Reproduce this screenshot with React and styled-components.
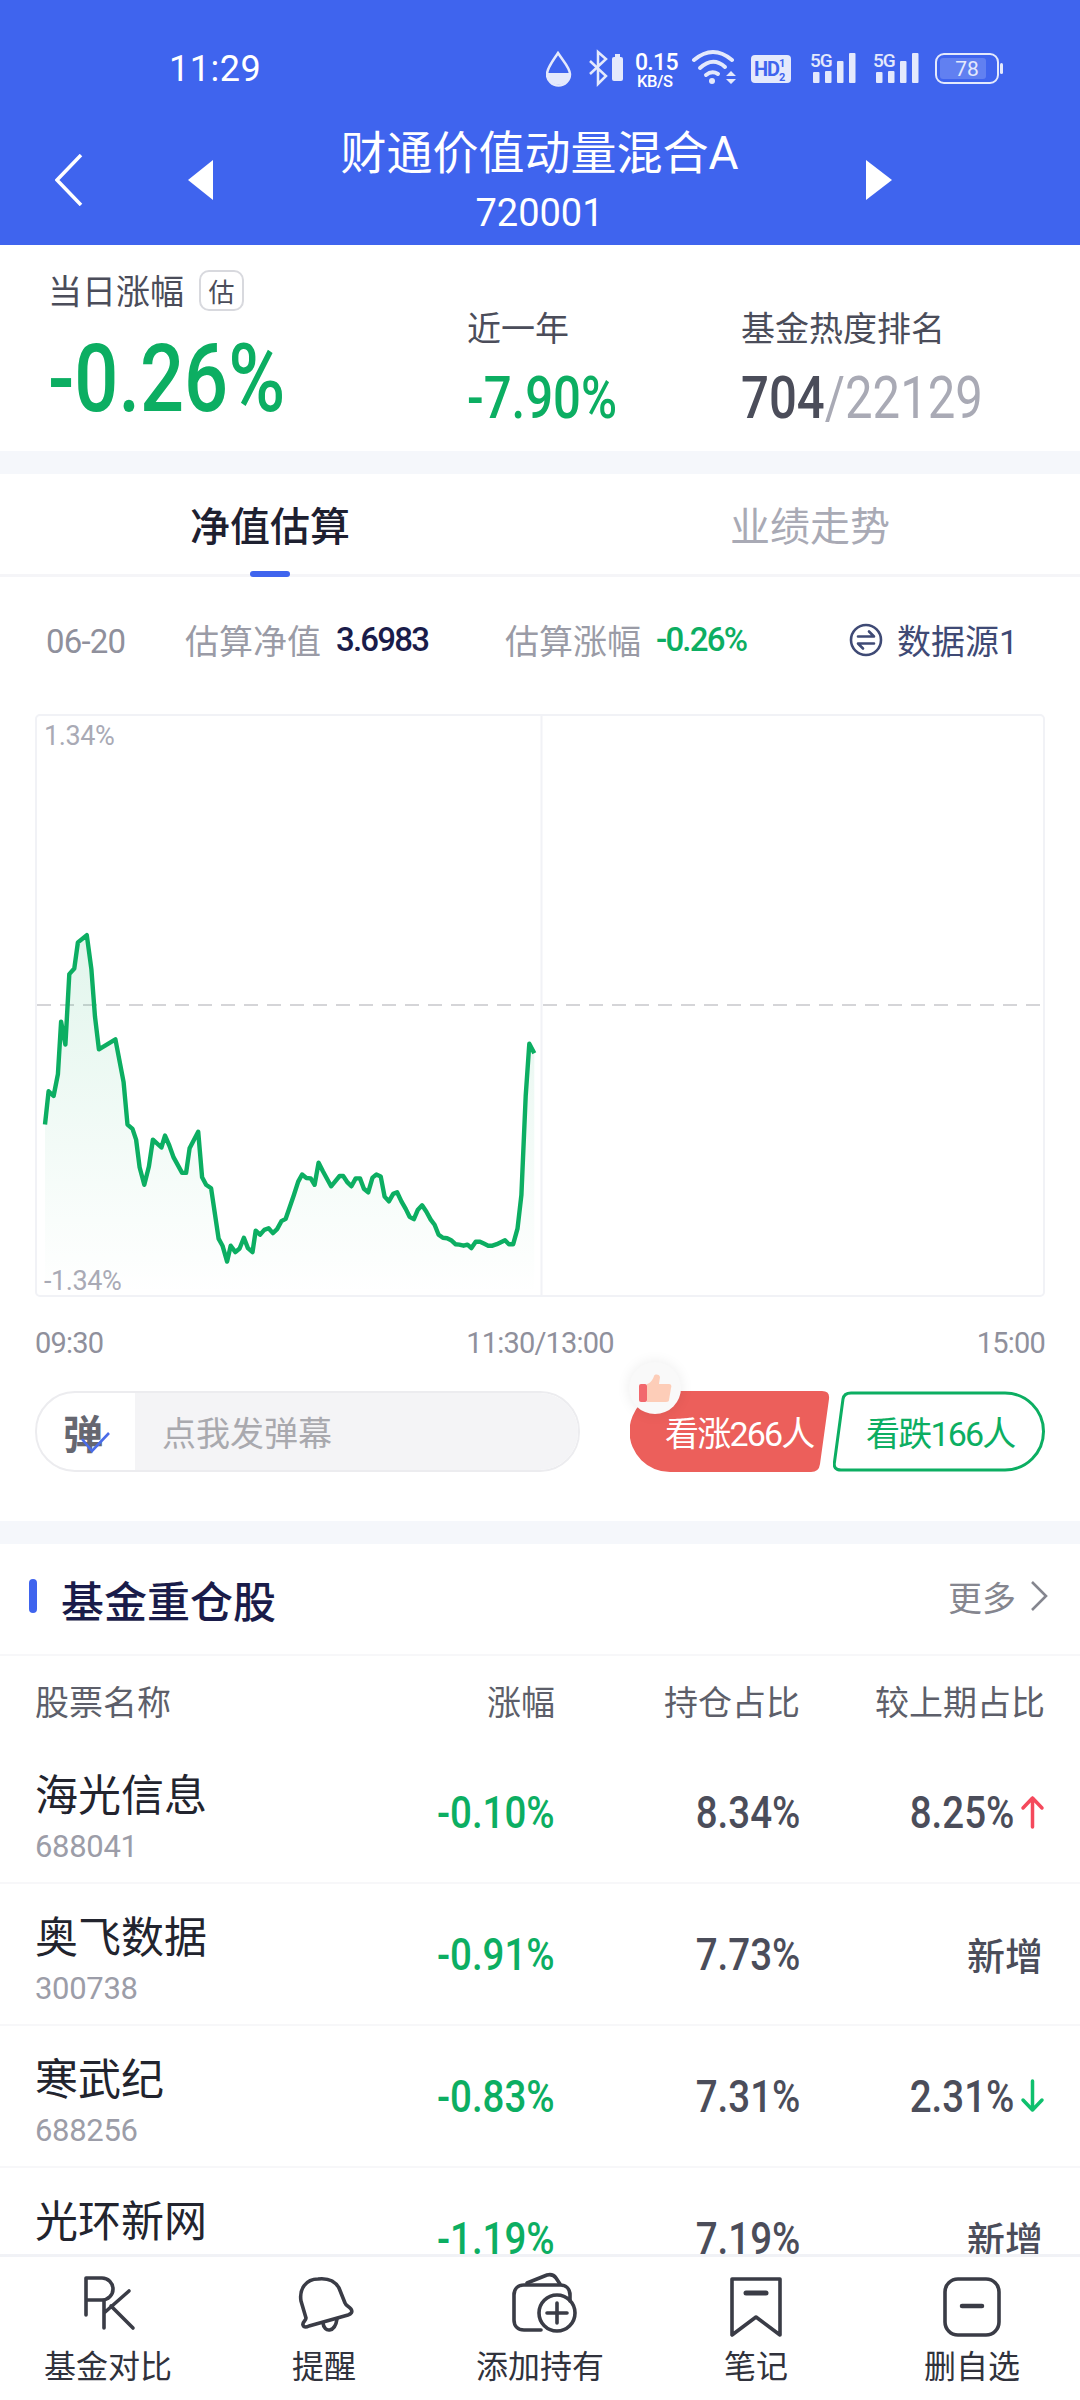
import React from 'react';
import styled, { createGlobalStyle } from 'styled-components';

const BLUE = '#3f64ee';
const GREEN = '#0cae62';
const DARK = '#4b4d5a';
const GRAY = '#a9aab5';
const NAVY = '#1a1c4a';

const GlobalStyle = createGlobalStyle`
  html, body { margin: 0; padding: 0; background: #fff; }
  body { font-family: Roboto, "Noto Sans CJK SC", sans-serif; }
  * { box-sizing: border-box; }
`;

const Page = styled.div`
  width: 1080px;
  height: 2400px;
  display: flex;
  flex-direction: column;
  overflow: hidden;
  background: #fff;
`;

const Header = styled.header`
  height: 245px;
  flex: none;
  background: ${BLUE};
  color: #fff;
`;

const StatusBar = styled.div`
  height: 123px;
  padding: 15px 77px 0 169px;
  display: flex;
  align-items: center;
  justify-content: space-between;
`;

const Time = styled.span`
  font-size: 36px;
  letter-spacing: 0.5px;
`;

const NavRow = styled.div`
  display: flex;
  align-items: center;
  padding-left: 55px;
  padding-right: 188px;
`;

const NavIcon = styled.svg`
  flex: none;
  margin-left: ${(p) => p.$left || 0}px;
  margin-bottom: 6px;
`;

const TitleBlock = styled.div`
  flex: 1;
  text-align: center;
`;

const Title = styled.div`
  font-size: 46px;
  line-height: 60px;
`;

const Code = styled.div`
  font-size: 38px;
  line-height: 60px;
`;

const Stats = styled.section`
  height: 206px;
  flex: none;
  display: flex;
  padding-left: 48px;
`;

const StatCol = styled.div`
  width: ${(p) => p.$width}px;
  padding-top: ${(p) => p.$top}px;
`;

const StatLabel = styled.div`
  display: flex;
  align-items: center;
  height: 44px;
  font-size: 34px;
  color: ${DARK};
`;

const EstTag = styled.span`
  width: 45px;
  height: 41px;
  margin: 3px 0 0 15px;
  display: flex;
  align-items: center;
  justify-content: center;
  border: 2px solid #d8d9de;
  border-radius: 10px;
  font-size: 26px;
`;

const BigValue = styled.div`
  margin-top: 18px;
  font-size: 94px;
  line-height: 100px;
  font-weight: 500;
  color: ${GREEN};
  transform: scaleX(0.825);
  transform-origin: left center;
`;

const MidValue = styled.div`
  margin-top: 15px;
  font-size: 59px;
  line-height: 70px;
  font-weight: 500;
  white-space: nowrap;
  color: ${(p) => p.$color || GREEN};
  transform: scaleX(0.832);
  transform-origin: left center;
  span { color: ${GRAY}; font-weight: 400; }
`;

const GapBar = styled.div`
  height: 23px;
  flex: none;
  background: #f5f7fb;
`;

const Tabs = styled.div`
  height: 103px;
  flex: none;
  display: flex;
  border-bottom: 3px solid #f5f5f8;
`;

const Tab = styled.div`
  position: relative;
  flex: 1;
  display: flex;
  align-items: center;
  justify-content: center;
  font-size: 40px;
  font-weight: ${(p) => (p.$active ? 500 : 400)};
  color: ${(p) => (p.$active ? '#1e2030' : GRAY)};
  ${(p) =>
    p.$active &&
    `&::after {
      content: '';
      position: absolute;
      left: 250px;
      bottom: -3px;
      width: 40px;
      height: 6px;
      border-radius: 3px;
      background: ${BLUE};
    }`}
`;

const InfoRow = styled.div`
  height: 130px;
  flex: none;
  display: flex;
  align-items: center;
  padding: 0 62px 5px 46px;
`;

const InfoDate = styled.span`
  width: 139px;
  margin-top: 3px;
  font-size: 33px;
  letter-spacing: -0.8px;
  color: #8f909c;
`;

const InfoGroup = styled.div`
  display: flex;
  align-items: center;
  width: ${(p) => p.$width}px;
  gap: 15px;
`;

const InfoLabel = styled.span`
  font-size: 34px;
  color: #9a9ba6;
`;

const InfoValue = styled.span`
  font-size: 33px;
  font-weight: 500;
  letter-spacing: -1.8px;
  color: ${(p) => p.$color};
`;

const Source = styled.div`
  margin-left: auto;
  display: flex;
  align-items: center;
  gap: 14px;
  font-size: 34px;
  color: #3f4a75;
`;

const ChartBox = styled.div`
  position: relative;
  flex: none;
  width: 1010px;
  height: 583px;
  margin: 7px 0 0 35px;
  svg { display: block; }
`;

const ChartLabel = styled.span`
  position: absolute;
  left: 9px;
  ${(p) => (p.$bottom ? 'bottom: 0;' : 'top: 6px;')}
  font-size: 27px;
  line-height: 32px;
  letter-spacing: -0.4px;
  color: ${GRAY};
`;

const AxisRow = styled.div`
  height: 92px;
  flex: none;
  padding: 0 35px;
  display: flex;
  align-items: center;
  justify-content: space-between;
  font-size: 29px;
  letter-spacing: -0.8px;
  color: #8f909c;
`;

const ActionRow = styled.div`
  height: 81px;
  flex: none;
  margin: 2px 0 49px;
  padding-left: 35px;
  display: flex;
`;

const Danmu = styled.div`
  width: 545px;
  display: flex;
  border: 2px solid #ececef;
  border-radius: 40px;
  overflow: hidden;
`;

const DanmuBadge = styled.div`
  position: relative;
  width: 98px;
  flex: none;
  display: flex;
  align-items: center;
  justify-content: center;
  padding-right: 6px;
  font-size: 40px;
  font-weight: 700;
  color: #666770;
  svg { position: absolute; left: 44px; top: 39px; }
`;

const DanmuInput = styled.div`
  flex: 1;
  display: flex;
  align-items: center;
  padding-left: 27px;
  background: #f4f4f6;
  font-size: 34px;
  color: #a9a9ae;
`;

const Vote = styled.div`
  position: relative;
  width: ${(p) => p.$width}px;
  margin-left: ${(p) => p.$left}px;
  display: flex;
  align-items: center;
  padding-left: ${(p) => p.$pad}px;
  font-size: 34px;
  letter-spacing: -1.8px;
  color: ${(p) => p.$color};
  > svg { position: absolute; inset: 0; }
  > span { position: relative; }
`;

const ThumbBadge = styled.div`
  position: absolute;
  left: -1px;
  top: -29px;
  width: 52px;
  height: 52px;
  display: flex;
  align-items: center;
  justify-content: center;
  border-radius: 50%;
  background: #f9f9f9;
  box-shadow: 0 0 14px rgba(0, 0, 0, 0.08);
`;

const SectionHead = styled.div`
  height: 112px;
  flex: none;
  display: flex;
  align-items: center;
  padding: 0 32px 0 29px;
  border-bottom: 2px solid #f7f7f9;
`;

const SectionMark = styled.i`
  width: 8px;
  height: 34px;
  margin: -6px 24px 0 0;
  border-radius: 4px;
  background: ${BLUE};
`;

const SectionTitle = styled.h2`
  margin: 0;
  font-size: 43px;
  font-weight: 500;
  color: ${NAVY};
`;

const More = styled.div`
  margin-left: auto;
  display: flex;
  align-items: center;
  gap: 14px;
  margin-top: -6px;
  font-size: 34px;
  color: #85868f;
`;

const TableRow = styled.div`
  display: grid;
  grid-template-columns: 1fr 165px 245px 245px;
  padding: 0 35px;
  height: ${(p) => p.$height}px;
  flex: none;
  align-items: center;
  justify-items: end;
  border-bottom: ${(p) => (p.$line ? '2px solid #f7f7f9' : 'none')};
`;

const HeadCell = styled.span`
  font-size: 34px;
  color: #5d5f6a;
  margin-top: 2px;
  &:first-child { justify-self: start; }
`;

const NameCell = styled.div`
  justify-self: start;
  align-self: start;
  padding-top: 25px;
`;

const StockName = styled.div`
  font-size: 43px;
  line-height: 58px;
  color: #22242e;
`;

const StockCode = styled.div`
  font-size: 31px;
  line-height: 40px;
  margin-top: 2px;
  letter-spacing: -0.3px;
  color: #9c9da8;
`;

const NumCell = styled.div`
  display: flex;
  align-items: center;
  align-self: start;
  height: 60px;
  margin-top: 40px;
  svg { margin-left: 6px; }
`;

const NumText = styled.span`
  display: inline-block;
  font-size: 45px;
  font-weight: 500;
  color: ${(p) => p.$color || DARK};
  transform: scaleX(0.855);
  transform-origin: right center;
`;

const NewTag = styled.span`
  align-self: start;
  height: 60px;
  line-height: 60px;
  margin-top: 43px;
  margin-right: 2px;
  font-size: 38px;
  font-weight: 500;
  color: ${DARK};
`;

const TableClip = styled.div`
  flex: 1;
  min-height: 0;
  overflow: hidden;
  display: flex;
  flex-direction: column;
`;

const BottomBar = styled.nav`
  height: 146px;
  flex: none;
  display: flex;
  background: #fff;
  border-top: 3px solid #f1f2f6;
`;

const BarItem = styled.div`
  width: 216px;
  display: flex;
  flex-direction: column;
  align-items: center;
  padding-top: 16px;
  font-size: 32px;
  color: #30323c;
  svg { display: block; overflow: visible; }
  span { line-height: 46px; margin-top: 5px; }
`;

// line traced over the chart, in crop coordinates of the zoom (2.8 / 2.525 scale)
const RAW = [
  [70, 1072], [80, 988], [94, 1000], [106, 945], [115, 812], [127, 870], [138, 692], [152, 678], [162, 612], [187, 594],
  [200, 680], [210, 800], [221, 882], [267, 857], [290, 965], [301, 1072], [315, 1083], [325, 1110], [335, 1180], [348, 1224],
  [361, 1178], [372, 1110], [396, 1130], [406, 1100], [418, 1125], [430, 1155], [454, 1194], [465, 1194], [475, 1132], [499, 1090],
  [510, 1205], [521, 1224], [535, 1233], [556, 1360], [567, 1378], [580, 1418], [590, 1378], [603, 1394], [615, 1385], [627, 1358],
  [638, 1384], [651, 1394], [660, 1340], [672, 1350], [684, 1338], [696, 1334], [708, 1346], [720, 1336], [732, 1316], [744, 1310],
  [767, 1250], [779, 1216], [790, 1198], [802, 1207], [814, 1208], [825, 1224], [836, 1168], [848, 1190], [871, 1228], [882, 1216],
  [895, 1202], [905, 1202], [917, 1218], [928, 1228], [940, 1208], [952, 1208], [963, 1234], [975, 1243], [987, 1206], [998, 1198],
  [1010, 1203], [1021, 1254], [1033, 1266], [1045, 1247], [1056, 1243], [1068, 1266], [1080, 1285], [1091, 1305], [1103, 1311], [1114, 1287],
  [1126, 1276], [1138, 1292], [1150, 1312], [1161, 1325], [1172, 1350], [1184, 1358], [1196, 1359], [1207, 1364], [1219, 1374], [1230, 1375],
  [1242, 1378], [1253, 1375], [1264, 1384], [1276, 1368], [1288, 1368], [1300, 1373], [1311, 1378], [1323, 1378], [1335, 1374], [1358, 1364],
  [1369, 1374], [1381, 1374], [1393, 1335], [1404, 1250], [1416, 1000], [1426, 868], [1440, 892],
];
const POINTS = RAW.map(([x, y]) => [(20 + x / 2.8 - 35).toFixed(1), (700 + y / 2.525 - 714).toFixed(1)]);
const LINE = POINTS.map((p) => p.join(',')).join(' ');
const AREA = `${POINTS[0][0]},581 ${LINE} ${POINTS[POINTS.length - 1][0]},581`;

const stocks = [
  { name: '海光信息', code: '688041', change: '-0.10%', hold: '8.34%', prev: '8.25%', dir: 'up' },
  { name: '奥飞数据', code: '300738', change: '-0.91%', hold: '7.73%' },
  { name: '寒武纪', code: '688256', change: '-0.83%', hold: '7.31%', prev: '2.31%', dir: 'down' },
  { name: '光环新网', change: '-1.19%', hold: '7.19%' },
];

function StatusIcons() {
  const c = '#e4e9fc';
  const signal = (x) => (
    <g key={x} fill={c}>
      <text x={x} y="68" fontSize="19" fontWeight="500" letterSpacing="-1">5G</text>
      <rect x={x + 3} y="73" width="6.5" height="11" rx="1" />
      <rect x={x + 15} y="72" width="6.5" height="12" rx="1" />
      <rect x={x + 27} y="62" width="6.5" height="22" rx="1" />
      <rect x={x + 39} y="54" width="6.5" height="30" rx="1" />
    </g>
  );
  return (
    <svg width="457" height="44" viewBox="546 48 457 44">
      <path d="M558 54C552 63 547 69 547 75a11.5 11.5 0 0 0 23 0C570 69 564 63 558 54z" fill="none" stroke={c} strokeWidth="2.5" />
      <path d="M547 74h23a11.5 11.5 0 0 1-23 0z" fill={c} />
      <path d="M590 62l16 15-8 8V53l8 7-16 15" fill="none" stroke={c} strokeWidth="2.5" />
      <rect x="612" y="58" width="11" height="24" rx="2" fill={c} />
      <rect x="615" y="55" width="5" height="3" fill={c} />
      <text x="635" y="71" fontSize="23" fontWeight="500" fill="#fff" letterSpacing="-0.7">0.15</text>
      <text x="637" y="88" fontSize="16.5" fontWeight="500" fill="#fff" letterSpacing="-0.4">KB/S</text>
      <g fill="none" stroke={c} strokeWidth="4" strokeLinecap="round">
        <path d="M694 61Q713 45 732 61" />
        <path d="M700 69Q713 57 725 68" />
        <path d="M706 76Q712 71 718 75" />
      </g>
      <circle cx="712" cy="82" r="3" fill={c} />
      <path d="M731 72l5 5h-10zM731 85l5-5h-10z" fill={c} />
      <rect x="751" y="56" width="40" height="28" rx="4" fill={c} />
      <text x="754" y="77" fontSize="20" fontWeight="700" fill={BLUE} letterSpacing="-1.2">HD</text>
      <text x="779" y="68" fontSize="11" fontWeight="700" fill={BLUE}>1</text>
      <text x="779" y="82" fontSize="11" fontWeight="700" fill={BLUE}>2</text>
      {signal(810)}
      {signal(873)}
      <rect x="936" y="55" width="62" height="29" rx="8" fill="none" stroke={c} strokeWidth="2" />
      <rect x="940" y="59" width="46" height="21" rx="3" fill="#fff" fillOpacity="0.18" />
      <text x="967" y="77" fontSize="21" textAnchor="middle" fill={c}>78</text>
      <rect x="1000" y="64" width="3" height="11" rx="1.5" fill={c} />
    </svg>
  );
}

function Arrow({ dir }) {
  const color = dir === 'up' ? '#f5495c' : '#0fc06d';
  return (
    <svg width="25" height="34" viewBox="0 0 25 34" fill="none" stroke={color} strokeWidth="3.5" strokeLinecap="round" strokeLinejoin="round">
      {dir === 'up' ? <path d="M12.5 32V3M3 13l9.500-10L22 13" /> : <path d="M12.5 2v29M3 21l9.500 10L22 21" />}
    </svg>
  );
}

function Chart() {
  return (
    <ChartBox>
      <svg width="1010" height="583" viewBox="0 0 1010 583">
        <defs>
          <linearGradient id="areaFill" x1="0" y1="0" x2="0" y2="1">
            <stop offset="0" stopColor={GREEN} stopOpacity="0.12" />
            <stop offset="1" stopColor={GREEN} stopOpacity="0" />
          </linearGradient>
        </defs>
        <rect x="1" y="1" width="1008" height="581" rx="4" fill="none" stroke="#f1f2f6" strokeWidth="2" />
        <line x1="506.500" y1="1" x2="506.500" y2="582" stroke="#f1f2f6" strokeWidth="2" />
        <line x1="2" y1="291" x2="1008" y2="291" stroke="#c8c8cb" strokeWidth="1.5" strokeDasharray="14 9" />
        <polygon points={AREA} fill="url(#areaFill)" />
        <polyline points={LINE} fill="none" stroke={GREEN} strokeWidth="4.4" strokeLinejoin="round" />
      </svg>
      <ChartLabel>1.34%</ChartLabel>
      <ChartLabel $bottom>-1.34%</ChartLabel>
    </ChartBox>
  );
}

export default function App() {
  const iconStroke = { fill: 'none', stroke: '#3a3c46', strokeWidth: 3.6, strokeLinecap: 'round', strokeLinejoin: 'round' };
  return (
    <Page>
      <GlobalStyle />
      <Header>
        <StatusBar>
          <Time>11:29</Time>
          <StatusIcons />
        </StatusBar>
        <NavRow>
          <NavIcon width="28" height="52" viewBox="0 0 28 52" fill="none" stroke="#fff" strokeWidth="3.500">
            <path d="M26 1L2 26l24 25" />
          </NavIcon>
          <NavIcon $left={105} width="25" height="40" viewBox="0 0 25 40" fill="#fff">
            <path d="M25 0v40L0 20z" />
          </NavIcon>
          <TitleBlock>
            <Title>财通价值动量混合A</Title>
            <Code>720001</Code>
          </TitleBlock>
          <NavIcon width="26" height="40" viewBox="0 0 26 40" fill="#fff">
            <path d="M0 0v40l26-20z" />
          </NavIcon>
        </NavRow>
      </Header>

      <Stats>
        <StatCol $width={419} $top={22}>
          <StatLabel>当日涨幅<EstTag>估</EstTag></StatLabel>
          <BigValue>-0.26%</BigValue>
        </StatCol>
        <StatCol $width={274} $top={59}>
          <StatLabel>近一年</StatLabel>
          <MidValue>-7.90%</MidValue>
        </StatCol>
        <StatCol $width={300} $top={59}>
          <StatLabel>基金热度排名</StatLabel>
          <MidValue $color={DARK}>704<span>/22129</span></MidValue>
        </StatCol>
      </Stats>
      <GapBar />

      <Tabs>
        <Tab $active>净值估算</Tab>
        <Tab>业绩走势</Tab>
      </Tabs>

      <InfoRow>
        <InfoDate>06-20</InfoDate>
        <InfoGroup $width={320}>
          <InfoLabel>估算净值</InfoLabel>
          <InfoValue $color={NAVY}>3.6983</InfoValue>
        </InfoGroup>
        <InfoGroup $width={300}>
          <InfoLabel>估算涨幅</InfoLabel>
          <InfoValue $color={GREEN}>-0.26%</InfoValue>
        </InfoGroup>
        <Source>
          <svg width="34" height="34" viewBox="0 0 34 34" fill="none" stroke="#3f4a75" strokeWidth="2.600">
            <circle cx="17" cy="17" r="15" />
            <path d="M9 13.500h16l-5-5M25 20.500H9l5 5" strokeLinecap="round" strokeLinejoin="round" />
          </svg>
          数据源1
        </Source>
      </InfoRow>

      <Chart />

      <AxisRow>
        <span>09:30</span>
        <span>11:30/13:00</span>
        <span>15:00</span>
      </AxisRow>

      <ActionRow>
        <Danmu>
          <DanmuBadge>
            弹
            <svg width="30" height="21" viewBox="0 0 30 21" fill="none" stroke="#4a6ce8" strokeWidth="2.600">
              <path d="M1 7l10 12L28 1" />
            </svg>
          </DanmuBadge>
          <DanmuInput>点我发弹幕</DanmuInput>
        </Danmu>
        <Vote $width={200} $left={50} $pad={35} $color="#fff">
          <svg width="200" height="81" viewBox="0 0 200 81">
            <path d="M40 0H192Q200 0 199 8L190 73Q189 81 181 81H40A40 40 0 0 1 40 0z" fill="#ec5f5b" />
          </svg>
          <span>看涨266人</span>
          <ThumbBadge>
            <svg width="33" height="28" viewBox="0 0 33 28">
              <path d="M8 10C12 9 14 5 15 2C16 0 20 0 21 3L20 10H30C32 10 33 12 32 14L30 26C30 27 29 28 27 28H8z" fill="#fdcdb8" />
              <rect y="10" width="8" height="18" rx="2" fill="#f2686d" />
            </svg>
          </ThumbBadge>
        </Vote>
        <Vote $width={212} $left={3} $pad={33} $color={GREEN}>
          <svg width="212" height="81" viewBox="0 0 212 81">
            <path d="M18 2H172A38.500 38.500 0 0 1 172 79H8Q0 79 1.500 71L10 8Q11 2 18 2z" fill="#fff" stroke={GREEN} strokeWidth="3" />
          </svg>
          <span>看跌166人</span>
        </Vote>
      </ActionRow>
      <GapBar />

      <SectionHead>
        <SectionMark />
        <SectionTitle>基金重仓股</SectionTitle>
        <More>
          更多
          <svg width="18" height="32" viewBox="0 0 18 32" fill="none" stroke="#85868f" strokeWidth="2.600">
            <path d="M2 2l14 14L2 30" />
          </svg>
        </More>
      </SectionHead>

      <TableClip>
        <TableRow $height={86}>
          <HeadCell>股票名称</HeadCell>
          <HeadCell>涨幅</HeadCell>
          <HeadCell>持仓占比</HeadCell>
          <HeadCell>较上期占比</HeadCell>
        </TableRow>
        {stocks.map((s) => (
          <TableRow key={s.name} $height={142} $line>
            <NameCell>
              <StockName>{s.name}</StockName>
              {s.code && <StockCode>{s.code}</StockCode>}
            </NameCell>
            <NumCell><NumText $color={GREEN}>{s.change}</NumText></NumCell>
            <NumCell><NumText>{s.hold}</NumText></NumCell>
            {s.prev ? (
              <NumCell><NumText>{s.prev}</NumText><Arrow dir={s.dir} /></NumCell>
            ) : (
              <NewTag>新增</NewTag>
            )}
          </TableRow>
        ))}
      </TableClip>

      <BottomBar>
        <BarItem>
          <svg width="66" height="66" viewBox="0 0 66 66" {...iconStroke}>
            <path d="M11 42V5H27a11 11 0 0 1 0 22H11" />
            <path d="M29 28V55M54 18L29 40M36 33L58 55" />
          </svg>
          <span>基金对比</span>
        </BarItem>
        <BarItem>
          <svg width="66" height="66" viewBox="0 0 66 66" {...iconStroke}>
            <path d="M27 6C15 6 8 16 10 28L15 45C15 48 11 49 12 52C13 55 16 54 18 53L57 42C60 41 62 39 60 36C58 33 55 33 54 30L48 15C44 8 36 5 27 6z" />
            <path d="M32 50C33 60 44 60 46 46" />
          </svg>
          <span>提醒</span>
        </BarItem>
        <BarItem>
          <svg width="66" height="66" viewBox="0 0 66 66" {...iconStroke}>
            <path d="M34 57H17C11 57 7 53 7 47V22C7 16 11 12 17 12H53C59 12 63 16 63 22V28" />
            <path d="M20 10L40 2C44 1 47 2 49 5L53 11" />
            <circle cx="50" cy="40" r="18" />
            <path d="M50 30V50M40 40H60" />
          </svg>
          <span>添加持有</span>
        </BarItem>
        <BarItem>
          <svg width="66" height="66" viewBox="0 0 66 66" {...iconStroke}>
            <path d="M9 6H57V62L33 44L9 62z" />
            <path d="M23 20H43" strokeWidth="5" />
          </svg>
          <span>笔记</span>
        </BarItem>
        <BarItem>
          <svg width="66" height="66" viewBox="0 0 66 66" {...iconStroke}>
            <rect x="6" y="6" width="54" height="56" rx="13" />
            <path d="M23 33H43" strokeWidth="4.500" />
          </svg>
          <span>删自选</span>
        </BarItem>
      </BottomBar>
    </Page>
  );
}
